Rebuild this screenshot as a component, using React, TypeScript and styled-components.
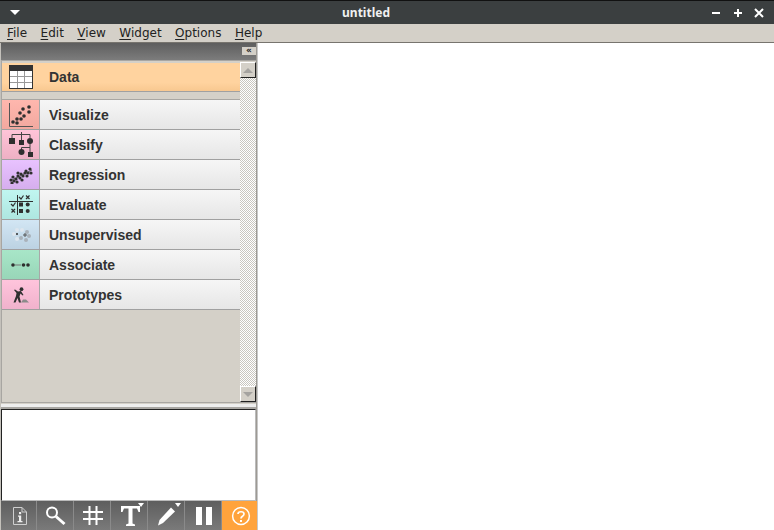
import React from 'react';
import styled, { createGlobalStyle } from 'styled-components';

const Global = createGlobalStyle`
  html, body { margin: 0; padding: 0; background: #fff; overflow: hidden; }
  #root { width: 774px; height: 530px; }
`;

const Window = styled.div`
  width: 774px;
  height: 530px;
  display: flex;
  flex-direction: column;
  overflow: hidden;
  background: #d4d0c8;
`;

const TitleBar = styled.div`
  height: 24px;
  flex: none;
  box-sizing: border-box;
  border-top: 1px solid #111;
  background: #3b3f40;
  display: flex;
  align-items: center;
  padding: 0 10px;
  color: #fff;
  font: bold 12px "Noto Sans", sans-serif;
`;

const Title = styled.div`
  flex: 1;
  text-align: center;
  color: #f0f0f0;
`;

const WinButtons = styled.div`
  display: flex;
  gap: 11px;
  align-items: center;
`;

const MenuBar = styled.div`
  height: 18px;
  flex: none;
  display: flex;
  gap: 13.5px;
  padding-left: 7px;
  align-items: center;
  background: #d4d0c8;
  border-bottom: 1px solid #77746e;
  font: 12px "DejaVu Sans", sans-serif;
  color: #222;
`;

const MenuItem = styled.span`
  display: inline-block;
  & u { text-underline-offset: 2px; }
`;

const Body = styled.div`
  flex: 1;
  display: flex;
  min-height: 0;
`;

const Dock = styled.div`
  width: 257px;
  flex: none;
  box-sizing: border-box;
  display: flex;
  flex-direction: column;
  border-left: 1px solid #c4c1bb;
  border-right: 1px solid #9d9a94;
`;

const DockHeader = styled.div`
  height: 18px;
  flex: none;
  box-sizing: border-box;
  background: linear-gradient(#5e5e5e, #7c7c7c);
  border-bottom: 1px solid #a8a6a2;
  display: flex;
  justify-content: flex-end;
  padding-top: 4px;
`;

const Collapse = styled.div`
  width: 14px;
  height: 8px;
  background: #d4d0c8;
  color: #222;
  font: bold 9px/7px "DejaVu Sans", sans-serif;
  text-align: center;
`;

const ToolBox = styled.div`
  height: 341px;
  flex: none;
  display: flex;
  padding-top: 1px;
  box-sizing: border-box;
  border-left: 1px solid #a8a6a2;
`;

const Categories = styled.div`
  width: 238px;
  flex: none;
  padding-top: 1px;
  box-sizing: border-box;
  display: flex;
  flex-direction: column;
`;

const Row = styled.div<{ $active?: boolean }>`
  height: ${p => (p.$active ? 29 : 30)}px;
  flex: none;
  box-sizing: border-box;
  display: flex;
  align-items: center;
  border-bottom: 1px solid #a0a0a0;
  background: ${p => (p.$active ? 'linear-gradient(#ffd39f 70%, #f8c890)' : 'linear-gradient(#f6f6f6, #e6e6e6)')};
`;

const Spacer = styled.div`
  height: 7px;
  flex: none;
  background: #d4d0c8;
  border-bottom: 1px solid #a8a6a2;
`;

const IconCell = styled.div<{ $bg?: string }>`
  width: 38px;
  height: 100%;
  flex: none;
  box-sizing: border-box;
  padding-left: 1px;
  display: flex;
  align-items: center;
  justify-content: center;
  background: ${p => p.$bg ?? 'transparent'};
  border-right: 1px solid ${p => (p.$bg ? '#a8a8a8' : 'transparent')};
`;

const RowLabel = styled.span`
  margin-left: 9px;
  font: bold 14px "Liberation Sans", sans-serif;
  color: #333;
`;

const ScrollBar = styled.div`
  width: 16px;
  flex: none;
  display: flex;
  flex-direction: column;
  justify-content: space-between;
  background-color: #d4d0c8;
  background-image: repeating-conic-gradient(#fff 0 25%, #c9c6bf 0 50%);
  background-size: 2px 2px;
`;

const ScrollBtn = styled.div`
  width: 16px;
  height: 16px;
  box-sizing: border-box;
  background: #d4d0c8;
  border: 1px solid;
  border-color: #fff #222 #222 #fff;
  display: flex;
  align-items: center;
  justify-content: center;
`;

const Arrow = styled.div<{ $down?: boolean }>`
  width: 0;
  height: 0;
  border-left: 5px solid transparent;
  border-right: 5px solid transparent;
  ${p => (p.$down ? 'border-top: 5px solid #a5a3a0;' : 'border-bottom: 5px solid #a5a3a0;')}
`;

const Splitter = styled.div`
  height: 7px;
  flex: none;
  background: linear-gradient(#a8a6a2 0 1px, #d4d0c8 1px 2px, #eee 2px 5px, #a8a6a2 5px);
`;

const InfoBox = styled.div`
  flex: 1;
  min-height: 0;
  background: #fff;
  border: 1px solid;
  border-color: #222 #bbb #bbb #222;
`;

const ToolBar = styled.div`
  height: 29px;
  flex: none;
  display: flex;
  background: linear-gradient(#5e5e5e, #7a7a7a);
`;

const ToolBtn = styled.div<{ $orange?: boolean }>`
  width: 37px;
  height: 100%;
  flex: none;
  box-sizing: border-box;
  position: relative;
  padding-left: 2px;
  display: flex;
  align-items: center;
  justify-content: center;
  border-right: 1px solid #8a8a8a;
  &:first-child { width: 36px; }
  ${p => p.$orange && 'background: #ffa33c; border-right: none; width: 35px;'}
`;

const Corner = styled.div`
  position: absolute;
  top: 2px;
  right: 3px;
  width: 0;
  height: 0;
  border-left: 3px solid transparent;
  border-right: 3px solid transparent;
  border-top: 4px solid #fff;
`;

const Canvas = styled.div`
  flex: 1;
  background: #fff;
  border-left: 1px solid #c8c8c8;
`;

const Ink = '#2f2f2f';

const TableIcon = () => (
  <svg width="24" height="24" viewBox="0 0 24 24">
    <rect x="0.5" y="0.5" width="23" height="23" fill="#fff" stroke="#333" />
    <rect x="1" y="1" width="22" height="5" fill="#333" />
    <path d="M1 11.5H23M1 17.5H23M8.5 6V23M15.5 6V23" stroke="#999" fill="none" />
  </svg>
);

const Dots = ({ pts, r = 1.6 }: { pts: number[][]; r?: number }) => (
  <>
    {pts.map(([x, y], i) => (
      <circle key={i} cx={x} cy={y} r={r} fill={Ink} />
    ))}
  </>
);

const VisualizeIcon = () => (
  <svg width="24" height="24" viewBox="0 0 24 24">
    <path d="M0.5 0V23.5H24" stroke="#555" strokeWidth="1" fill="none" />
    <Dots pts={[[20, 4], [14, 6], [20, 9], [11, 10], [15, 13], [8, 16], [12, 16], [4, 19], [8, 20]]} r={1.8} />
  </svg>
);

const ClassifyIcon = () => (
  <svg width="24" height="26" viewBox="0 0 24 26">
    <path d="M3 6V2.5H21V6M12.5 0V8M21 10V15.5H12.5V18M21 15.5V20" stroke="#444" fill="none" />
    <rect x="0" y="6" width="6" height="6" fill={Ink} />
    <rect x="10" y="8" width="5" height="5" fill={Ink} />
    <circle cx="21" cy="9" r="3" fill={Ink} />
    <circle cx="12.5" cy="20" r="3" fill={Ink} />
    <rect x="19" y="20" width="5" height="5" fill={Ink} />
  </svg>
);

const RegressionIcon = () => (
  <svg width="24" height="18" viewBox="0 0 24 18">
    <path d="M1 15L23 4" stroke="#666" fill="none" />
    <Dots pts={[[2, 14], [5, 15], [4, 11], [7, 13], [8, 16], [3, 17], [9, 10], [11, 12], [12, 8], [14, 10], [16, 7], [17, 5], [19, 7], [21, 3], [22, 7], [13, 14], [18, 10], [9, 7]]} r={1.6} />
  </svg>
);

const EvaluateIcon = () => (
  <svg width="24" height="20" viewBox="0 0 24 20">
    <path d="M0 6.5H24M8.5 0V20" stroke={Ink} fill="none" />
    <path d="M10 2L12 4L14.5 0.5M17 0.5L20.5 4M20.5 0.5L17 4" stroke={Ink} fill="none" strokeWidth="1.2" />
    <path d="M2 9L4 11L6.5 7.5M2.5 14L6 17.5M6 14L2.5 17.5" stroke={Ink} fill="none" strokeWidth="1.2" />
    <rect x="10" y="7.5" width="4" height="4" fill={Ink} />
    <circle cx="18.7" cy="9.5" r="2" fill={Ink} />
    <rect x="10" y="14" width="4" height="4" fill={Ink} />
    <circle cx="18.7" cy="16" r="2" fill={Ink} />
  </svg>
);

const UnsupervisedIcon = () => (
  <svg width="22" height="16" viewBox="0 0 22 16">
    <g fill="#dde6ee">
      <circle cx="7" cy="3" r="2" />
      <circle cx="4" cy="7" r="2" />
      <circle cx="7" cy="12" r="2" />
      <circle cx="12" cy="3" r="2" />
    </g>
    <g fill="#a9b2ba">
      <circle cx="17" cy="5" r="2" />
      <circle cx="19" cy="9" r="2" />
      <circle cx="16" cy="13" r="2" />
      <circle cx="11" cy="11" r="2" />
    </g>
    <circle cx="7" cy="7" r="1" fill={Ink} />
    <path d="M13 8H17M15 6V10" stroke="#555" />
  </svg>
);

const AssociateIcon = () => (
  <svg width="20" height="6" viewBox="0 0 20 6">
    <circle cx="2" cy="3" r="1.8" fill={Ink} />
    <path d="M4 3H10" stroke="#777" />
    <circle cx="12.5" cy="3" r="1.8" fill={Ink} />
    <circle cx="17" cy="3" r="1.8" fill={Ink} />
  </svg>
);

const PrototypesIcon = () => (
  <svg width="16" height="16" viewBox="0 0 16 16">
    <circle cx="8.5" cy="2.2" r="1.9" fill={Ink} />
    <path d="M1 3L2 2.5L5 4.5L8 4L10.5 8L9.5 8.5L7.5 6.5L6.5 9.5L8 15.5H6L4.5 11L2.5 15.5H0.5L3 9L3.5 6Z" fill={Ink} />
    <path d="M8 15.5L10 12.5H13L16 15.5Z" fill="#8a8a8a" />
  </svg>
);

const categories = [
  { label: 'Visualize', bg: 'linear-gradient(#ffb7ae, #f2a89f)', icon: <VisualizeIcon /> },
  { label: 'Classify', bg: 'linear-gradient(#ffc4d8, #eeb0c4)', icon: <ClassifyIcon /> },
  { label: 'Regression', bg: 'linear-gradient(#e8c2ff, #d6aeee)', icon: <RegressionIcon /> },
  { label: 'Evaluate', bg: 'linear-gradient(#c0f6f0, #aee6e0)', icon: <EvaluateIcon /> },
  { label: 'Unsupervised', bg: 'linear-gradient(#d2e6f4, #bcd2e2)', icon: <UnsupervisedIcon /> },
  { label: 'Associate', bg: 'linear-gradient(#a8e6c8, #98d6b8)', icon: <AssociateIcon /> },
  { label: 'Prototypes', bg: 'linear-gradient(#ffc4dc, #f0b2cc)', icon: <PrototypesIcon /> },
];

const menus = ['File', 'Edit', 'View', 'Widget', 'Options', 'Help'];

export default function App() {
  return (
    <Window>
      <Global />
      <TitleBar>
        <svg width="10" height="6" viewBox="0 0 10 6">
          <path d="M0 0H10L5 5Z" fill="#fff" />
        </svg>
        <Title>untitled</Title>
        <WinButtons>
          <svg width="10" height="10" viewBox="0 0 10 10">
            <path d="M0 5H8" stroke="#fff" strokeWidth="2" />
          </svg>
          <svg width="10" height="10" viewBox="0 0 10 10">
            <path d="M1 5H9M5 1V9" stroke="#fff" strokeWidth="2" />
          </svg>
          <svg width="10" height="10" viewBox="0 0 10 10">
            <path d="M1 1L9 9M9 1L1 9" stroke="#fff" strokeWidth="2" />
          </svg>
        </WinButtons>
      </TitleBar>
      <MenuBar>
        {menus.map(m => (
          <MenuItem key={m}>
            <u>{m[0]}</u>
            {m.slice(1)}
          </MenuItem>
        ))}
      </MenuBar>
      <Body>
        <Dock>
          <DockHeader>
            <Collapse>«</Collapse>
          </DockHeader>
          <ToolBox>
            <Categories>
              <Row $active>
                <IconCell>
                  <TableIcon />
                </IconCell>
                <RowLabel>Data</RowLabel>
              </Row>
              <Spacer />
              {categories.map(c => (
                <Row key={c.label}>
                  <IconCell $bg={c.bg}>{c.icon}</IconCell>
                  <RowLabel>{c.label}</RowLabel>
                </Row>
              ))}
            </Categories>
            <ScrollBar>
              <ScrollBtn>
                <Arrow />
              </ScrollBtn>
              <ScrollBtn>
                <Arrow $down />
              </ScrollBtn>
            </ScrollBar>
          </ToolBox>
          <Splitter />
          <InfoBox />
          <ToolBar>
            <ToolBtn>
              <svg width="16" height="18" viewBox="0 0 16 18">
                <path d="M1.5 0.5H10L14.5 5V17.5H1.5Z" fill="none" stroke="#cfcfcf" />
                <path d="M10 0.5V5H14.5" fill="none" stroke="#cfcfcf" />
                <rect x="7" y="5" width="2.2" height="2.2" fill="#eee" />
                <path d="M6 8.5H9.2V14H10.5V15.2H5.5V14H7V9.7H6Z" fill="#eee" />
              </svg>
            </ToolBtn>
            <ToolBtn>
              <svg width="22" height="20" viewBox="0 0 22 20">
                <circle cx="7" cy="6.5" r="5" fill="none" stroke="#fff" strokeWidth="2" />
                <path d="M11 10.5L19.5 18" stroke="#fff" strokeWidth="3" />
              </svg>
            </ToolBtn>
            <ToolBtn>
              <svg width="20" height="19" viewBox="0 0 20 19">
                <path d="M6.5 0V19M13.5 0V19M0 6H20M0 13H20" stroke="#fff" strokeWidth="2" fill="none" />
              </svg>
            </ToolBtn>
            <ToolBtn>
              <svg width="19" height="20" viewBox="0 0 19 20">
                <path d="M0 0H19V6H17.5L16 2.5H11.5V17.5L14 18.5V20H5V18.5L7.5 17.5V2.5H3L1.5 6H0Z" fill="#fff" />
              </svg>
              <Corner />
            </ToolBtn>
            <ToolBtn>
              <svg width="20" height="20" viewBox="0 0 20 20">
                <path d="M14 1.5L18 5.5L6 17L1 19.5L2.5 14Z" fill="#fff" />
              </svg>
              <Corner />
            </ToolBtn>
            <ToolBtn>
              <svg width="16" height="18" viewBox="0 0 16 18">
                <rect x="0" y="0" width="6" height="18" fill="#fff" />
                <rect x="10" y="0" width="6" height="18" fill="#fff" />
              </svg>
            </ToolBtn>
            <ToolBtn $orange>
              <svg width="20" height="20" viewBox="0 0 20 20">
                <circle cx="10" cy="10" r="8.4" fill="none" stroke="#fff" strokeWidth="1.5" />
                <path d="M7 8C7 5 13 5 13 8C13 10.5 10 10 10 12.5" fill="none" stroke="#fff" strokeWidth="1.7" />
                <rect x="9" y="14" width="2" height="2" fill="#fff" />
              </svg>
            </ToolBtn>
          </ToolBar>
        </Dock>
        <Canvas />
      </Body>
    </Window>
  );
}
